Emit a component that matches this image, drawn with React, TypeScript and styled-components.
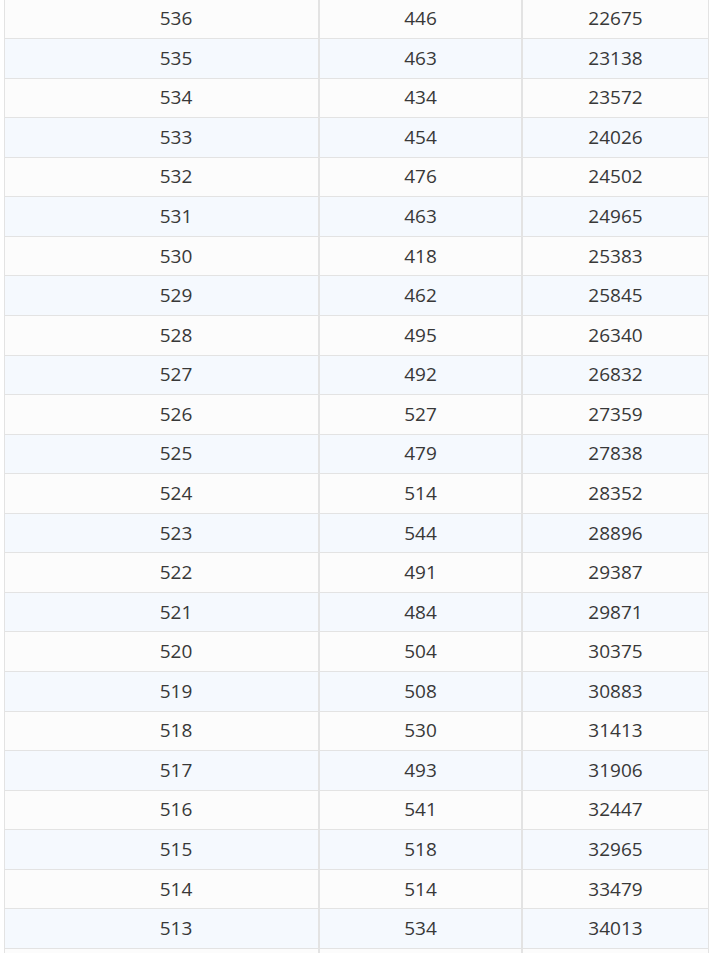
import React from "react";
import styled, { createGlobalStyle } from "styled-components";

const Global = createGlobalStyle`
  html, body { margin: 0; padding: 0; background: #ffffff; }
  body { overflow: hidden; }
`;

const rows: [string, string, string][] = [
  ["536", "446", "22675"],
  ["535", "463", "23138"],
  ["534", "434", "23572"],
  ["533", "454", "24026"],
  ["532", "476", "24502"],
  ["531", "463", "24965"],
  ["530", "418", "25383"],
  ["529", "462", "25845"],
  ["528", "495", "26340"],
  ["527", "492", "26832"],
  ["526", "527", "27359"],
  ["525", "479", "27838"],
  ["524", "514", "28352"],
  ["523", "544", "28896"],
  ["522", "491", "29387"],
  ["521", "484", "29871"],
  ["520", "504", "30375"],
  ["519", "508", "30883"],
  ["518", "530", "31413"],
  ["517", "493", "31906"],
  ["516", "541", "32447"],
  ["515", "518", "32965"],
  ["514", "514", "33479"],
  ["513", "534", "34013"],
  ["", "", ""],
];

const Table = styled.div`
  margin: -0.565px 0 0 4px;
  width: 705px;
  border-left: 1px solid #e3e3e3;
  border-right: 1px solid #e3e3e3;
  box-sizing: border-box;
  font-family: "Open Sans", "Noto Sans CJK SC", sans-serif;
  font-size: 19px;
  color: #383838;
`;

const Row = styled.div<{ $striped: boolean }>`
  display: grid;
  grid-template-columns: 315px 203px 1fr;
  height: 39.565px;
  box-sizing: border-box;
  border-bottom: 1px solid #e3e3e3;
  background: ${(p) => (p.$striped ? "#f5f9fe" : "#fcfcfc")};
`;

const Cell = styled.div<{ $first?: boolean; $last?: boolean }>`
  display: flex;
  align-items: center;
  justify-content: center;
  box-sizing: border-box;
  padding-left: ${(p) => (p.$first ? "29px" : "0")};
  border-right: ${(p) => (p.$last ? "none" : "2px solid #e3e3e3")};
  line-height: 1;
`;

export default function App() {
  return (
    <>
      <Global />
      <Table>
        {rows.map((r, i) => (
          <Row key={i} $striped={i % 2 === 1}>
            <Cell $first>{r[0]}</Cell>
            <Cell>{r[1]}</Cell>
            <Cell $last>{r[2]}</Cell>
          </Row>
        ))}
      </Table>
    </>
  );
}
